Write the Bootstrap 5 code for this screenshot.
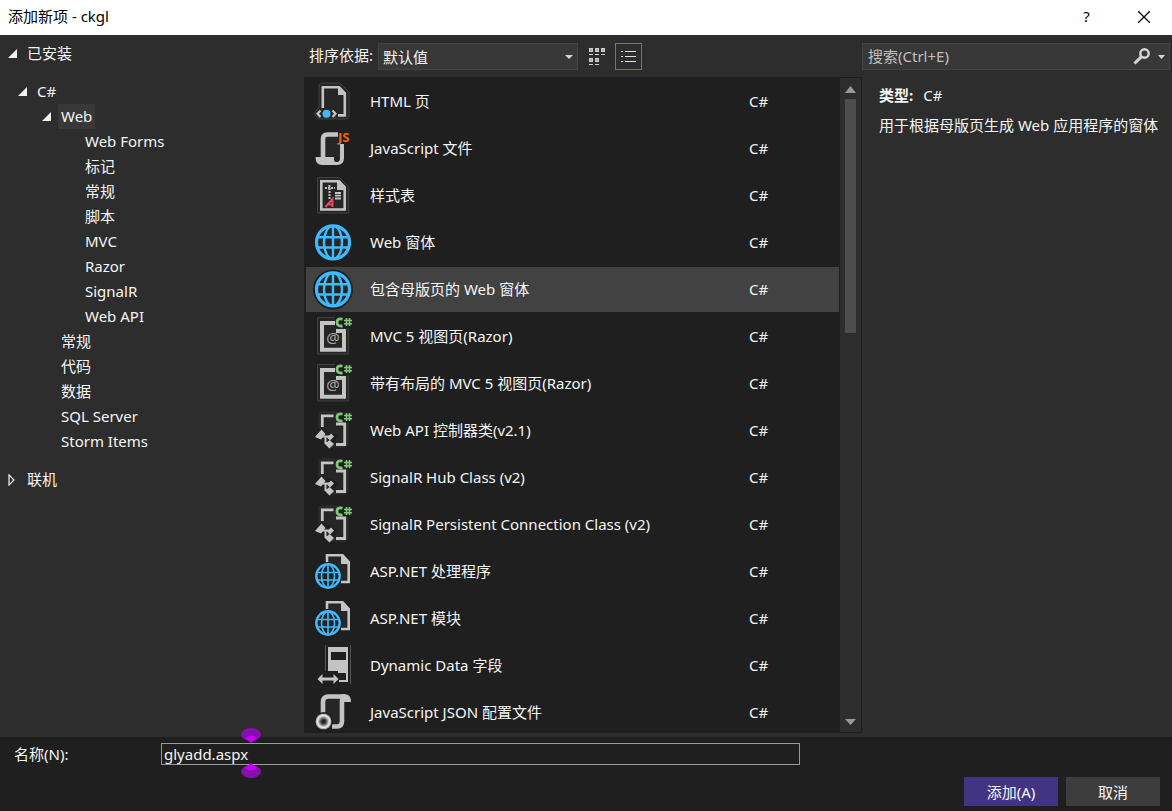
<!DOCTYPE html>
<html lang="zh-CN">
<head>
<meta charset="utf-8">
<meta name="viewport" content="width=device-width, initial-scale=1">
<title>添加新项 - ckgl</title>
<link href="https://cdn.jsdelivr.net/npm/bootstrap@5.3.0/dist/css/bootstrap.min.css" rel="stylesheet">
<style>
  body { font-family: "Noto Sans", "Noto Sans CJK SC", sans-serif; font-size: 15px; line-height: 25px; color: #f5f5f5; background: #2d2d2d; }
  button, input, select { font: inherit; color: inherit; }
  svg { display: block; flex: none; }
  .titlebar { height: 35px; background: #fff; color: #000; padding: 0 0 2px 8px; flex: none; }
  .caption-btn { width: 57px; height: 33px; background: none; border: 0; color: #000; padding: 0; display: grid; place-items: center; }
  .workspace { display: grid; grid-template-columns: 304px 1fr 310px; grid-template-rows: minmax(0, 1fr); padding-bottom: 4px; min-height: 0; }
  .tree { padding-top: 6px; }
  .tree ul { list-style: none; margin: 0; padding: 0; }
  .tree a { color: inherit; text-decoration: none; display: inline-block; height: 25px; padding: 0 3px; vertical-align: top; }
  .tree li { white-space: nowrap; }
  .node { display: flex; align-items: center; height: 25px; }
  .node svg { margin-right: 7px; }
  .level-0 { padding-left: 8px; }
  .level-1 { padding-left: 18px; }
  .level-2 { padding-left: 42px; }
  .leaf-2 { padding-left: 58px; }
  .leaf-3 { padding-left: 82px; }
  .tree .tree-gap { margin-top: 13px; }
  .tree a.current { background: #383838; }
  .toolbar { height: 42px; padding: 8px 0 0 5px; }
  .sort-select { width: 200px; height: 27px; margin: 0 6px 0 5px; border: 1px solid #434346; border-radius: 0; appearance: none; padding: 0 4px; line-height: 24px;
    background: #383838 url("data:image/svg+xml,%3Csvg xmlns='http://www.w3.org/2000/svg' width='8' height='4'%3E%3Cpath d='M0 0h8L4 4z' fill='%23d6d6d6'/%3E%3C/svg%3E") no-repeat right 4px center; }
  .view-btn { width: 27px; height: 27px; border: 1px solid transparent; background: none; padding: 0; display: grid; place-items: center; }
  .view-btn.active { border-color: #7160e8; }
  .templates { background: #1f1f1f; padding: 1px 1px 1px 2px; }
  .template-list { overflow: hidden; }
  .template { display: flex; align-items: center; width: 100%; height: 45px; margin: 1px 0; padding: 0 0 0 5px; border: 0; background: none; text-align: left; flex: none; }
  .template.active { background: #424242; }
  .template .title-text { flex: 1; padding-left: 15px; }
  .template .lang { width: 90px; }
  .scroll { width: 21px; background: #2d2d2d; margin-left: 1px; padding: 8px 5px 7px; }
  .thumb { height: 234px; background: #4d4d4d; margin-top: 6px; }
  .search { height: 27px; margin: 8px 2px 0 0; border: 1px solid #434346; background: #383838; padding: 0 4px 0 5px; }
  .search input { background: none; border: 0; outline: 0; padding: 0; min-width: 0; flex: 1; }
  .search input::placeholder { color: #c0c0c0; opacity: 1; }
  .details { padding: 13px 0 0 17px; white-space: nowrap; }
  .details b { margin-right: 10px; }
  .details p { margin: 5px 0 0; }
  .bottom-bar { background: #1f1f1f; height: 74px; padding: 5px 12px 5px 14px; flex: none; }
  .name-label { width: 147px; }
  .name-box { width: 639px; height: 22px; }
  .name-box input { width: 100%; height: 22px; background: #1f1f1f; border: 1px solid #999; padding: 0 2px; line-height: 20px; outline: 0; }
  .handle { position: absolute; left: 80px; }
  .handle-top { bottom: 21px; }
  .handle-bottom { top: 21px; }
  .dialog-btn { width: 94px; height: 29px; border: 0; padding: 2px 0 0; background: #3d3d3d; }
  .dialog-btn.main-action { background: #413583; }
  .ink { fill: none; stroke: #c4c4c4; }
  .solid { fill: #c4c4c4; }
  .halo { fill: #262626; stroke: #404040; }
  .cs path { fill: none; stroke: #80c878; }
</style>
</head>
<body class="vh-100 d-flex flex-column overflow-hidden">

<svg width="0" height="0" class="position-absolute" aria-hidden="true">
  <defs>
    <radialGradient id="ring"><stop offset=".2" stop-color="#222"/><stop offset=".45" stop-color="#777"/><stop offset=".75" stop-color="#f0f0f0"/><stop offset="1" stop-color="#888"/></radialGradient>
    <symbol id="open" viewBox="0 0 9 9"><path d="M9 0v9H0z" fill="#f1f1f1"/></symbol>
    <symbol id="i-html" viewBox="0 0 44 45">
      <path class="halo" d="M8 28V6l2-2h19l9 9v25l-2 2H7l-4-5z"/>
      <path class="ink" stroke-width="2.600" d="M11.800 29V8.300H28l5.800 6V36.400H27"/><path class="solid" d="M27 7l8 9h-8z"/>
      <path class="ink" stroke-width="2.200" d="M9.500 31.500L6.500 34.700l3 3.300M21.500 31.500l3 3.200-3 3.300"/><circle cx="15.500" cy="34.700" r="4" fill="#3fbaff"/>
    </symbol>
    <symbol id="i-js" viewBox="0 0 44 45">
      <path fill="#262626" d="M14 11h15v20H14z"/>
      <path class="ink" stroke-width="4.600" d="M12 31V13q0-4.500 4.500-4.500H27"/>
      <path class="solid" d="M4.500 31H23v2.500q0 2.500 2 2.500h1q3 0 3-4V18h4v14q0 7-7 7H11q-6.500 0-6.500-8z"/>
      <text x="27" y="15.500" fill="#f0640f" font-family="Noto Sans" font-size="13" font-weight="bold">JS</text>
    </symbol>
    <symbol id="i-css" viewBox="0 0 44 45">
      <path class="halo" d="M6.500 4.500h22l9 9V40H6.500z"/>
      <path class="ink" stroke-width="2.600" d="M10.300 8.300H28l5.700 6v22.200H10.300z"/><path class="solid" d="M26 7l9 10h-9z"/>
      <path class="ink" stroke-width="2" stroke-dasharray="2 1" d="M14 15h10M18.500 12v14"/>
      <path class="ink" stroke-width="1.800" d="M24 20h6M24 22.700h6M24 25.500h6"/>
      <path d="M14.500 34L21.500 26V34M17 31.500h5" fill="none" stroke="#e04a59" stroke-width="2"/>
    </symbol>
    <symbol id="i-globe" viewBox="0 0 44 45">
      <circle cx="22" cy="22.400" r="20" fill="#1f1f1f"/>
      <g fill="#262626" stroke="#3fbaff" stroke-width="2.400"><circle cx="22" cy="22.400" r="16.500" stroke-width="3.200"/><ellipse cx="22" cy="22.400" rx="9" ry="16.500" fill="none"/><ellipse cx="22" cy="22.400" rx="5" ry="16.500" fill="none" stroke="none"/><path d="M22 6v33M7 17.300h30M7 27.500h30"/></g>
    </symbol>
    <symbol id="hash-c" viewBox="0 0 17 11">
      <g class="cs"><path stroke-width="2.800" d="M7.500 2.200Q2 .8 2 5.300T7.500 8.800"/><path stroke-width="1.600" d="M11.500 1v8M14.500 1v8M9 3.500h8M9 6.800h8"/></g>
    </symbol>
    <symbol id="i-view" viewBox="0 0 44 45">
      <path class="halo" d="M6.500 3.500H26V5h11.500v35h-31z"/>
      <path class="ink" stroke-width="4" d="M24 9H11v26.700h22V17h-8"/>
      <text x="22" y="29" text-anchor="middle" fill="#a8a8a8" font-family="Noto Sans" font-size="15">@</text>
      <path d="M24 2h17v12H24z" fill="#1f1f1f"/><use href="#hash-c" x="24" y="3" width="17" height="11"/>
    </symbol>
    <symbol id="i-class" viewBox="0 0 44 45">
      <path class="halo" d="M8 20V5l2-1h16v11h11v21l-3 3H21z" style="stroke:#303030"/>
      <path class="ink" stroke-width="2.800" d="M11.300 19V7.800H22.500M25 16h8.700v20.500H25"/>
      <path d="M11 20l16 8-7 12-18-12z" fill="#1f1f1f"/>
      <path class="solid" d="M10.500 21.500l4 4.500-4.500 5.500-6-2.500zM20 25.500l3 3-4 4-3-3zM18.500 32l4.500 4-4.500 4.500-4.500-4.500z"/>
      <path class="ink" stroke-width="2" d="M10 28.500h10M14.500 28v7h5"/>
      <use href="#hash-c" x="24" y="4" width="17" height="11"/>
    </symbol>
    <symbol id="i-asp" viewBox="0 0 44 45">
      <path fill="#262626" d="M15 5h17l7 8v21H15z"/>
      <path class="ink" stroke-width="2.600" d="M16 13V6.300h15.500l6.200 6.700v20H30"/><path class="solid" d="M30 5l9 10h-9z"/>
      <circle cx="17" cy="27" r="14" fill="#1f1f1f"/>
      <g fill="#222" stroke="#3fbaff" stroke-width="1.600"><circle cx="17" cy="27" r="11.700" stroke-width="2.400"/><ellipse cx="17" cy="27" rx="6.500" ry="11.500"/><path d="M17 15.500v23M6.500 23.500h21M6.500 31h21"/></g>
    </symbol>
    <symbol id="i-data" viewBox="0 0 44 45">
      <path stroke="#555" d="M14.500 2v26M39.500 2v39"/>
      <path class="solid" fill-rule="evenodd" d="M17 4h20v35h-9v-2h7v-7h-8v-2H17zM20 9v8h15V9z"/>
      <path class="solid" d="M6.500 36l5-5v3.500h11V31l5 5-5 5v-3.500h-11V41z"/>
    </symbol>
    <symbol id="i-json" viewBox="0 0 44 45">
      <path fill="#262626" d="M14 9h16v28H14z"/>
      <path class="ink" stroke-width="4.600" d="M12 23V12q0-5.500 5.500-5.500H34q-3 1-3 5V31q0 5.500-5 5.500h-5"/>
      <path class="solid" d="M30 4.200h4q6 0 6 7.800h-7z"/>
      <circle cx="12.500" cy="31.500" r="9.500" fill="#1f1f1f"/><circle cx="12.500" cy="31.500" r="8" fill="url(#ring)"/>
    </symbol>
  </defs>
</svg>

<header class="titlebar d-flex align-items-center">
  <span class="me-auto">添加新项 - ckgl</span>
  <button class="caption-btn" type="button" aria-label="帮助">?</button>
  <button class="caption-btn" type="button" aria-label="关闭"><svg width="12" height="12" viewBox="0 0 12 12"><path d="M0 0l12 12M12 0L0 12" stroke="#000" stroke-width="1.300"/></svg></button>
</header>

<main class="workspace flex-grow-1">
  <nav class="tree" aria-label="模板类别">
    <div class="node level-0"><svg width="9" height="9"><use href="#open"/></svg><a href="#">已安装</a></div>
    <ul class="tree-gap">
      <li><div class="node level-1"><svg width="9" height="9"><use href="#open"/></svg><a href="#">C#</a></div>
        <ul>
          <li><div class="node level-2"><svg width="9" height="9"><use href="#open"/></svg><a href="#" class="current">Web</a></div>
            <ul>
              <li class="node leaf-3"><a href="#">Web Forms</a></li>
              <li class="node leaf-3"><a href="#">标记</a></li>
              <li class="node leaf-3"><a href="#">常规</a></li>
              <li class="node leaf-3"><a href="#">脚本</a></li>
              <li class="node leaf-3"><a href="#">MVC</a></li>
              <li class="node leaf-3"><a href="#">Razor</a></li>
              <li class="node leaf-3"><a href="#">SignalR</a></li>
              <li class="node leaf-3"><a href="#">Web API</a></li>
            </ul>
          </li>
          <li class="node leaf-2"><a href="#">常规</a></li>
          <li class="node leaf-2"><a href="#">代码</a></li>
          <li class="node leaf-2"><a href="#">数据</a></li>
          <li class="node leaf-2"><a href="#">SQL Server</a></li>
          <li class="node leaf-2"><a href="#">Storm Items</a></li>
        </ul>
      </li>
    </ul>
    <div class="node level-0 tree-gap"><svg width="9" height="12" viewBox="0 0 9 12"><path d="M1 1l5 5-5 5z" fill="none" stroke="#f1f1f1" stroke-width="1.200"/></svg><a href="#">联机</a></div>
  </nav>

  <section class="d-flex flex-column">
    <div class="toolbar d-flex align-items-start">
      <label for="sort">排序依据:</label>
      <select id="sort" class="sort-select"><option>默认值</option></select>
      <button class="view-btn me-1" type="button" aria-label="中等图标">
        <svg width="19" height="19" viewBox="0 0 19 19" fill="none" stroke="#d0d0d0"><g stroke-width="1.600"><path d="M1.800 1.800h2.400v2.400H1.800zM7.800 1.800h2.400v2.400H7.800zM13.800 1.800h2.400v2.400h-2.400zM1.800 11.800h2.400v2.400H1.800zM7.800 11.800h2.400v2.400H7.800z"/></g><path d="M1 7.500h4M7 7.500h4M13 7.500h4M1 17.500h4M7 17.500h4"/></svg>
      </button>
      <button class="view-btn active" type="button" aria-label="小图标">
        <svg width="15" height="13" viewBox="0 0 15 13" stroke="#e0e0e0"><path d="M0 1.500h2M4 1.500h11M0 6.500h2M4 6.500h11M0 11.500h2M4 11.500h11"/></svg>
      </button>
    </div>
    <div class="templates d-flex flex-grow-1 overflow-hidden">
      <div class="template-list d-flex flex-column flex-grow-1">
        <button type="button" class="template"><svg width="44" height="45"><use href="#i-html"/></svg><span class="title-text">HTML 页</span><span class="lang">C#</span></button>
        <button type="button" class="template"><svg width="44" height="45"><use href="#i-js"/></svg><span class="title-text">JavaScript 文件</span><span class="lang">C#</span></button>
        <button type="button" class="template"><svg width="44" height="45"><use href="#i-css"/></svg><span class="title-text">样式表</span><span class="lang">C#</span></button>
        <button type="button" class="template"><svg width="44" height="45"><use href="#i-globe"/></svg><span class="title-text">Web 窗体</span><span class="lang">C#</span></button>
        <button type="button" class="template active"><svg width="44" height="45"><use href="#i-globe"/></svg><span class="title-text">包含母版页的 Web 窗体</span><span class="lang">C#</span></button>
        <button type="button" class="template"><svg width="44" height="45"><use href="#i-view"/></svg><span class="title-text">MVC 5 视图页(Razor)</span><span class="lang">C#</span></button>
        <button type="button" class="template"><svg width="44" height="45"><use href="#i-view"/></svg><span class="title-text">带有布局的 MVC 5 视图页(Razor)</span><span class="lang">C#</span></button>
        <button type="button" class="template"><svg width="44" height="45"><use href="#i-class"/></svg><span class="title-text">Web API 控制器类(v2.1)</span><span class="lang">C#</span></button>
        <button type="button" class="template"><svg width="44" height="45"><use href="#i-class"/></svg><span class="title-text">SignalR Hub Class (v2)</span><span class="lang">C#</span></button>
        <button type="button" class="template"><svg width="44" height="45"><use href="#i-class"/></svg><span class="title-text">SignalR Persistent Connection Class (v2)</span><span class="lang">C#</span></button>
        <button type="button" class="template"><svg width="44" height="45"><use href="#i-asp"/></svg><span class="title-text">ASP.NET 处理程序</span><span class="lang">C#</span></button>
        <button type="button" class="template"><svg width="44" height="45"><use href="#i-asp"/></svg><span class="title-text">ASP.NET 模块</span><span class="lang">C#</span></button>
        <button type="button" class="template"><svg width="44" height="45"><use href="#i-data"/></svg><span class="title-text">Dynamic Data 字段</span><span class="lang">C#</span></button>
        <button type="button" class="template"><svg width="44" height="45"><use href="#i-json"/></svg><span class="title-text">JavaScript JSON 配置文件</span><span class="lang">C#</span></button>
      </div>
      <div class="scroll d-flex flex-column flex-shrink-0" aria-hidden="true">
        <svg width="11" height="7" viewBox="0 0 11 7"><path d="M5.500 0L11 7H0z" fill="#999"/></svg>
        <div class="thumb"></div>
        <svg class="mt-auto" width="11" height="6" viewBox="0 0 11 6"><path d="M0 0h11L5.500 6z" fill="#999"/></svg>
      </div>
    </div>
  </section>

  <aside>
    <div class="search d-flex align-items-center">
      <input type="text" placeholder="搜索(Ctrl+E)" aria-label="搜索">
      <svg width="17" height="17" viewBox="0 0 17 17" fill="none" stroke="#d6d6d6"><circle cx="11.500" cy="5.500" r="4.200" stroke-width="2.400"/><path d="M8.500 8.700L1.500 15.500" stroke-width="3"/></svg>
      <svg class="ms-2" width="7" height="4" viewBox="0 0 7 4"><path d="M0 0h7L3.500 4z" fill="#d6d6d6"/></svg>
    </div>
    <div class="details">
      <div><b>类型:</b>C#</div>
      <p>用于根据母版页生成 Web 应用程序的窗体</p>
    </div>
  </aside>
</main>

<footer class="bottom-bar d-flex flex-column justify-content-between">
  <div class="d-flex">
    <label for="name" class="name-label">名称(N):</label>
    <div class="name-box position-relative">
      <input id="name" type="text" value="glyadd.aspx">
      <svg class="handle handle-top" width="20" height="15" viewBox="0 0 20 15"><ellipse cx="10" cy="6.500" rx="10" ry="6.500" fill="#8510ad"/><path d="M4 10Q10 5 16 10l-6 5z" fill="#c400ff"/></svg>
      <svg class="handle handle-bottom" width="20" height="15" viewBox="0 0 20 15"><ellipse cx="10" cy="8.500" rx="10" ry="6.500" fill="#8510ad"/><path d="M4 5Q10 10 16 5l-6-5z" fill="#c400ff"/></svg>
    </div>
  </div>
  <div class="d-flex justify-content-end gap-2">
    <button type="button" class="dialog-btn main-action">添加(A)</button>
    <button type="button" class="dialog-btn">取消</button>
  </div>
</footer>

<script src="https://cdn.jsdelivr.net/npm/bootstrap@5.3.0/dist/js/bootstrap.bundle.min.js"></script>
</body>
</html>
